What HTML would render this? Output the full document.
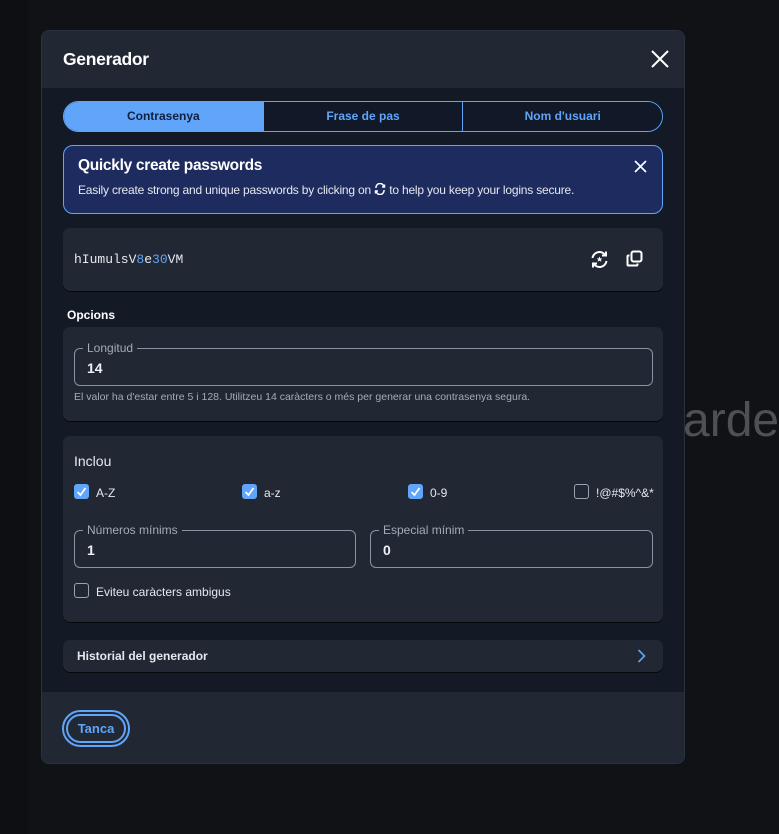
<!DOCTYPE html>
<html><head><meta charset="utf-8"><style>
*{box-sizing:border-box;margin:0;padding:0}
body{width:779px;height:834px;background:#111215;font-family:"Liberation Sans",sans-serif;position:relative;overflow:hidden;color:#fff}
.bg{position:absolute;left:0;top:0;width:28px;height:834px;background:#0e0f12}
.arde{position:absolute;left:619px;top:393px;font-size:48px;color:#4e5054;font-weight:300;letter-spacing:0px}
.dlg{position:absolute;left:41px;top:30px;width:644px;height:734px;background:#131a26;border:1px solid #2a3140;border-radius:8px;overflow:hidden}
.hd{height:57px;background:#212733;position:relative}
.hd h1{position:absolute;left:21px;top:18px;font-size:17.5px;font-weight:bold;letter-spacing:-0.3px}
.x{position:absolute}
.tabs{position:absolute;left:21px;top:70px;width:600px;height:31px;border:1px solid #60a5fa;border-radius:16px;overflow:hidden;display:flex}
.tabs div{flex:1;text-align:center;font-size:12px;font-weight:bold;color:#60a5fa;line-height:29px;border-left:1px solid #60a5fa;background:#111827}
.tabs div:first-child{background:#60a5fa;color:#102040;border-left:0}
.call{position:absolute;left:21px;top:114px;width:600px;height:69px;background:#1e2b5e;border:1px solid #60a5fa;border-radius:10px}
.call b{position:absolute;left:14px;top:11px;font-size:15.5px;letter-spacing:-0.3px}
.call p{position:absolute;left:14px;top:37px;font-size:12px;color:#e6e8ef;letter-spacing:-0.2px}
.card{position:absolute;left:21px;width:600px;background:#212733;border-radius:7px;box-shadow:0 1px 0 #05070b}
.pw{top:197px;height:63px}
.pw span{position:absolute;left:11px;top:24px;font-family:"Liberation Mono",monospace;font-size:13px;color:#e6e8ef}
.fld{position:absolute;border:1px solid #8a93a3;border-radius:6px;height:38px}
.fld label{position:absolute;left:8px;top:-8px;background:#212733;padding:0 4px;font-size:12px;color:#a3acba}
.fld span{position:absolute;left:12px;top:11px;font-size:14px;font-weight:bold;color:#eef}
.cb{position:absolute;width:15px;height:15px;border-radius:3px}
.on{background:#60a5fa}
.off{border:1px solid #9aa3b2}
.lbl{position:absolute;font-size:12px;color:#e6e8ef}
</style></head><body>
<div class="bg"></div>
<div class="arde">Guarde</div>
<div class="dlg">
 <div class="hd"><h1>Generador</h1>
  <svg class="x" style="left:609px;top:19px" width="18" height="18" viewBox="0 0 18 18"><path d="M1 1L17 17M17 1L1 17" stroke="#fff" stroke-width="2"/></svg>
 </div>
 <div class="tabs"><div>Contrasenya</div><div>Frase de pas</div><div>Nom d'usuari</div></div>
 <div class="call"><b>Quickly create passwords</b>
  <p>Easily create strong and unique passwords by clicking on <svg width="12" height="12" viewBox="0 0 12 12" style="vertical-align:-1px"><path d="M2 5A4 4 0 0 1 10 4M10 7A4 4 0 0 1 2 8M8 4h2.5V1.5M4 8H1.5v2.5" stroke="#fff" stroke-width="1.5" fill="none"/></svg> to help you keep your logins secure.</p>
  <svg class="x" style="left:570px;top:14px" width="13" height="13" viewBox="0 0 13 13"><path d="M1 1L12 12M12 1L1 12" stroke="#fff" stroke-width="1.7"/></svg>
 </div>
 <div class="card pw"><span>hIumulsV<i style="color:#60a5fa;font-style:normal">8</i>e<i style="color:#60a5fa;font-style:normal">30</i>VM</span>
  <svg class="x" style="left:526px;top:21px" width="21" height="21" viewBox="0 0 21 21"><path d="M3.5 9A7 7 0 0 1 16.5 6.5M17.5 12A7 7 0 0 1 4.5 14.5M13 6.5h4V2.5M8 14.5H4v4" stroke="#fff" stroke-width="2" fill="none"/><path d="M10.5 7.5l.9 2h2l-1.6 1.3.6 2-1.9-1.2-1.9 1.2.6-2-1.6-1.3h2z" fill="#fff"/></svg>
  <svg class="x" style="left:563px;top:22px" width="17" height="17" viewBox="0 0 17 17"><rect x="5.5" y="1.5" width="10" height="10" rx="2" stroke="#fff" stroke-width="2" fill="none"/><path d="M3.5 5.5h-1a1 1 0 0 0-1 1v8a1 1 0 0 0 1 1h8a1 1 0 0 0 1-1v-1" stroke="#fff" stroke-width="2" fill="none"/></svg>
 </div>
 <div class="lbl" style="left:25px;top:277px;font-weight:bold;font-size:12px;color:#fff">Opcions</div>
 <div class="card" style="top:296px;height:94px">
  <div class="fld" style="left:11px;top:21px;width:579px"><label>Longitud</label><span>14</span></div>
  <div class="lbl" style="left:11px;top:64px;font-size:10.5px;color:#a3acba">El valor ha d'estar entre 5 i 128. Utilitzeu 14 caràcters o més per generar una contrasenya segura.</div>
 </div>
 <div class="card" style="top:405px;height:186px">
  <div class="lbl" style="left:11px;top:17px;font-size:14px">Inclou</div>
  <div class="cb on" style="left:11px;top:48px"><svg width="15" height="15"><path d="M3.5 8l3 3 5-7" stroke="#fff" stroke-width="1.8" fill="none"/></svg></div><div class="lbl" style="left:33px;top:50px">A-Z</div>
  <div class="cb on" style="left:179px;top:48px"><svg width="15" height="15"><path d="M3.5 8l3 3 5-7" stroke="#fff" stroke-width="1.8" fill="none"/></svg></div><div class="lbl" style="left:201px;top:50px">a-z</div>
  <div class="cb on" style="left:345px;top:48px"><svg width="15" height="15"><path d="M3.5 8l3 3 5-7" stroke="#fff" stroke-width="1.8" fill="none"/></svg></div><div class="lbl" style="left:367px;top:50px">0-9</div>
  <div class="cb off" style="left:511px;top:48px"></div><div class="lbl" style="left:533px;top:50px">!@#$%^&amp;*</div>
  <div class="fld" style="left:11px;top:94px;width:282px"><label>Números mínims</label><span>1</span></div>
  <div class="fld" style="left:307px;top:94px;width:283px"><label>Especial mínim</label><span>0</span></div>
  <div class="cb off" style="left:11px;top:147px"></div><div class="lbl" style="left:33px;top:149px">Eviteu caràcters ambigus</div>
 </div>
 <div class="card" style="top:609px;height:32px">
  <div class="lbl" style="left:14px;top:9px;font-weight:bold">Historial del generador</div>
  <svg class="x" style="left:574px;top:9px" width="9" height="14" viewBox="0 0 9 14"><path d="M1.5 1l6 6-6 6" stroke="#60a5fa" stroke-width="1.6" fill="none"/></svg>
 </div>
 <div style="position:absolute;left:0;top:661px;width:644px;height:73px;background:#212733">
  <div style="position:absolute;left:20px;top:18px;width:68px;height:37px;border:2px solid #60a5fa;border-radius:19px;padding:2px"><div style="border:2px solid #60a5fa;border-radius:15px;height:29px;text-align:center;line-height:25px;font-size:13px;font-weight:bold;color:#60a5fa">Tanca</div></div>
 </div>
</div>
</body></html>
